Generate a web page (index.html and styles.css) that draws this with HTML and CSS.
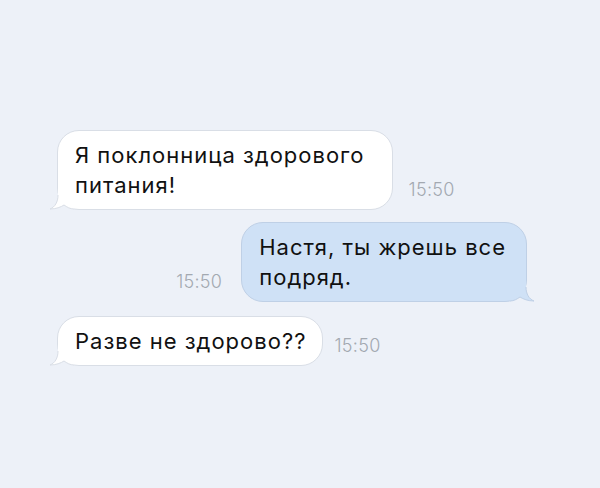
FILE: index.html
```html
<!DOCTYPE html>
<html lang="ru">
<head>
  <meta charset="UTF-8" />
  <meta name="viewport" content="width=device-width, initial-scale=1" />
  <title>Переписка</title>
  <link rel="stylesheet" href="styles.css">
</head>
<body>

<div class="chat">
  <div class="row row-in">
    <div class="bubble bubble-in wide">
      Я поклонница здорового<br>питания!
      <svg class="tail" width="24" height="24" viewBox="0 0 24 24">
        <path class="tail-fill" d="M8 0 L8 9 C8 16 5 21 0 23 C6 23 11 21 14 19 C17 21 20 23 24 23 L24 0 Z"/>
        <path class="tail-line" d="M8 9 C8 16 5 21 0 23 C6 23 11 21 14 19 C17 21 20 23 24 23"/>
      </svg>
    </div>
    <span class="time">15:50</span>
  </div>

  <div class="row row-out">
    <span class="time">15:50</span>
    <div class="bubble bubble-out wide">
      Настя, ты жрешь все<br>подряд.
      <svg class="tail" width="24" height="24" viewBox="0 0 24 24">
        <path class="tail-fill" d="M8 0 L8 9 C8 16 5 21 0 23 C6 23 11 21 14 19 C17 21 20 23 24 23 L24 0 Z"/>
        <path class="tail-line" d="M8 9 C8 16 5 21 0 23 C6 23 11 21 14 19 C17 21 20 23 24 23"/>
      </svg>
    </div>
  </div>

  <div class="row row-in last">
    <div class="bubble bubble-in">
      Разве не здорово??
      <svg class="tail" width="24" height="24" viewBox="0 0 24 24">
        <path class="tail-fill" d="M8 0 L8 9 C8 16 5 21 0 23 C6 23 11 21 14 19 C17 21 20 23 24 23 L24 0 Z"/>
        <path class="tail-line" d="M8 9 C8 16 5 21 0 23 C6 23 11 21 14 19 C17 21 20 23 24 23"/>
      </svg>
    </div>
    <span class="time">15:50</span>
  </div>
</div>

</body>
</html>
```

FILE: styles.css
```css
body {
  margin: 0;
  background: #edf1f8;
  font-family: Inter, "Noto Sans", sans-serif;
  color: #111;
}

.chat {
  display: flex;
  flex-direction: column;
  gap: 12px;
  padding-top: 130px;
}

.row {
  display: flex;
  align-items: flex-end;
  gap: 16px;
}

.row-in {
  padding-left: 57px;
}

.row-out {
  justify-content: flex-end;
  padding-right: 73px;
  gap: 19px;
}

.row.last {
  margin-top: 2px;
  gap: 11px;
}

.bubble {
  position: relative;
  padding: 9px 16px 9px 17px;
  font-size: 22px;
  letter-spacing: 1px;
  line-height: 30px;
  border-radius: 22px;
  border: 1px solid #d9dee6;
}

.bubble-in.wide {
  padding-right: 27px;
}

.bubble-out.wide {
  padding-right: 20px;
}

.bubble-in {
  background: #fff;
  --fill: #fff;
  --line: #d9dee6;
}

.bubble-out {
  background: #cfe1f6;
  border-color: #bfd0e6;
  --fill: #cfe1f6;
  --line: #bfd0e6;
}

.tail {
  position: absolute;
  left: -8px;
  bottom: -1px;
}

.bubble-out .tail {
  left: auto;
  right: -8px;
  transform: scaleX(-1);
}

.tail-fill {
  fill: var(--fill);
}

.tail-line {
  fill: none;
  stroke: var(--line);
  stroke-width: 1;
}

.time {
  font-size: 18px;
  line-height: 18px;
  margin-bottom: 11px;
  font-weight: 300;
  letter-spacing: 0.3px;
  color: #a3a9b1;
}
```
